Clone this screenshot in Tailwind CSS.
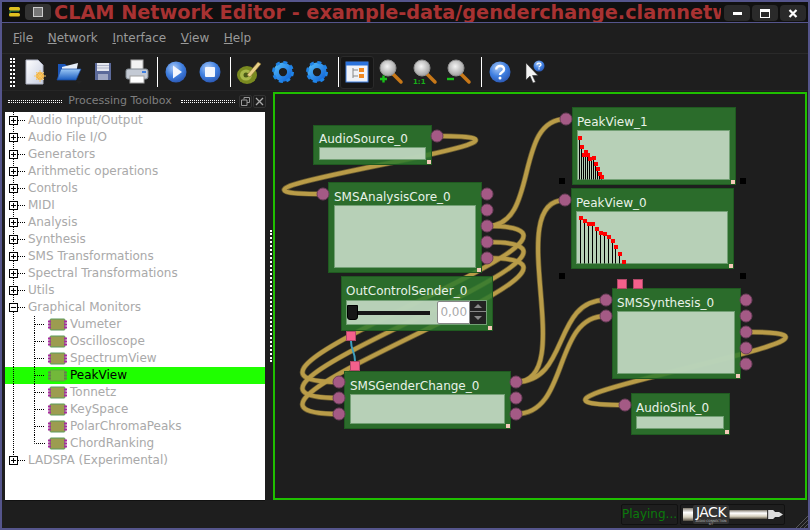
<!DOCTYPE html>
<html lang="en">
<head>
<meta charset="UTF-8">
<title>CLAM Network Editor</title>
<script src="https://cdn.jsdelivr.net/npm/@tailwindcss/browser@4"></script>
</head>
<body class="bg-[#1e1e1e] font-['DejaVu_Sans',sans-serif] overflow-hidden">

<svg width="0" height="0" class="absolute">
  <defs>
    <radialGradient id="blueBall" cx="40%" cy="30%" r="75%"><stop offset="0" stop-color="#a9c8f5"/><stop offset="0.55" stop-color="#3f7fe0"/><stop offset="1" stop-color="#2a55b0"/></radialGradient>
    <linearGradient id="gearBlue" x1="0" y1="0" x2="1" y2="1"><stop offset="0" stop-color="#4db4f5"/><stop offset="1" stop-color="#1568d8"/></linearGradient>
    <radialGradient id="lens" cx="45%" cy="40%" r="60%"><stop offset="0" stop-color="#f4f4f4"/><stop offset="1" stop-color="#a0a0a0"/></radialGradient>
    <linearGradient id="paper" x1="0" y1="0" x2="1" y2="1"><stop offset="0" stop-color="#ffffff"/><stop offset="1" stop-color="#c6cde0"/></linearGradient>
    <linearGradient id="folder" x1="0" y1="0" x2="0" y2="1"><stop offset="0" stop-color="#9cc8f5"/><stop offset="1" stop-color="#1a5cc0"/></linearGradient>
    <linearGradient id="jackPlug" x1="0" y1="0" x2="0" y2="1"><stop offset="0" stop-color="#8a8478"/><stop offset="0.35" stop-color="#ffffff"/><stop offset="0.7" stop-color="#d8d2c0"/><stop offset="1" stop-color="#5a5448"/></linearGradient>
    <symbol id="plus" viewBox="0 0 23 17"><path d="M8.5 0V4M8.5 13V17M13 8.5H20" stroke="#000" stroke-dasharray="1 1" fill="none"/><rect x="4.5" y="4.5" width="8" height="8" fill="#fff" stroke="#000"/><path d="M6 8.5H11M8.5 6V11" stroke="#000"/></symbol>
    <symbol id="plusLast" viewBox="0 0 23 17"><path d="M8.5 0V4M13 8.5H20" stroke="#000" stroke-dasharray="1 1" fill="none"/><rect x="4.5" y="4.5" width="8" height="8" fill="#fff" stroke="#000"/><path d="M6 8.5H11M8.5 6V11" stroke="#000"/></symbol>
    <symbol id="minus" viewBox="0 0 23 17"><path d="M8.5 0V4M8.5 13V17M13 8.5H20" stroke="#000" stroke-dasharray="1 1" fill="none"/><rect x="4.5" y="4.5" width="8" height="8" fill="#fff" stroke="#000"/><path d="M6 8.5H11" stroke="#000"/></symbol>
    <symbol id="proc" viewBox="0 0 65 17"><path d="M8.5 0V17M29.5 0V17M30 8.5H40" stroke="#000" stroke-dasharray="1 1" fill="none"/><rect x="45" y="3" width="15" height="11" rx="1" fill="#9c9c50" stroke="#5d9a5d"/><path d="M43 5.5H46M43 8.5H46M43 11.5H46M59 5.5H62M59 8.5H62M59 11.5H62" stroke="#a82aa0" stroke-width="2"/></symbol>
    <symbol id="procLast" viewBox="0 0 65 17"><path d="M8.5 0V17M29.5 0V8.5H40" stroke="#000" stroke-dasharray="1 1" fill="none"/><rect x="45" y="3" width="15" height="11" rx="1" fill="#9c9c50" stroke="#5d9a5d"/><path d="M43 5.5H46M43 8.5H46M43 11.5H46M59 5.5H62M59 8.5H62M59 11.5H62" stroke="#a82aa0" stroke-width="2"/></symbol>
    <symbol id="procSel" viewBox="0 0 65 17"><path d="M8.5 0V17M29.5 0V17M30 8.5H40" stroke="#000" stroke-dasharray="1 1" fill="none"/><rect x="45" y="3" width="15" height="11" rx="1" fill="#72b83a" stroke="#5aa83a"/><path d="M43 5.5H46M43 8.5H46M43 11.5H46M59 5.5H62M59 8.5H62M59 11.5H62" stroke="#6a7a50" stroke-width="2"/></symbol>
    <symbol id="glass" viewBox="0 0 26 26"><path d="M15 15L23 23" stroke="#c87818" stroke-width="3.5" stroke-linecap="round"/><circle cx="10" cy="9" r="8" fill="url(#lens)" stroke="#909090"/></symbol>
    <symbol id="gear" viewBox="0 0 24 24"><circle cx="12" cy="12" r="7.5" fill="none" stroke="url(#gearBlue)" stroke-width="6"/><circle cx="12" cy="12" r="10.5" fill="none" stroke="#1f84e8" stroke-width="3" stroke-dasharray="4.4 3.85"/></symbol>
  </defs>
</svg>

<div class="w-[810px] h-[530px] flex flex-col border-2 border-[#55558c] bg-[#1e1e1e] relative">
  <!-- title bar -->
  <div class="h-[21px] bg-[#101010] flex items-center relative shrink-0 overflow-hidden border-b border-[#55558c]">
    <svg width="16" height="16" viewBox="0 0 16 16" class="ml-[5px] shrink-0"><path d="M3 4H12V7H3V11H12" fill="none" stroke="#1f8f50" stroke-width="1"/><rect x="2" y="3" width="11" height="3.5" rx="1.5" fill="#e0c020"/><rect x="2" y="9" width="11" height="3.5" rx="1.5" fill="#e0c020"/></svg>
    <div class="ml-[2px] w-[26px] h-[16px] rounded-sm bg-[#333] flex items-center justify-center shrink-0"><div class="w-[10px] h-[10px] bg-[#777] border border-[#ccc]"></div></div>
    <div class="ml-[3px] w-[667px] overflow-hidden whitespace-nowrap text-[19.25px] leading-[21px] font-bold text-[#a83232]">CLAM Network Editor - example-data/genderchange.clamnetw</div>
    <div class="absolute right-[2px] top-[3px] flex gap-[2px]">
      <div class="w-[26px] h-[16px] rounded-sm bg-[#2a2a2a] flex items-center justify-center"><div class="w-[9px] h-[3px] bg-white"></div></div>
      <div class="w-[26px] h-[16px] rounded-sm bg-[#2a2a2a] flex items-center justify-center"><div class="w-[10px] h-[9px] border border-white border-t-[3px]"></div></div>
      <div class="w-[26px] h-[16px] rounded-sm bg-[#2a2a2a] flex items-center justify-center"><svg width="10" height="9" viewBox="0 0 10 9"><path d="M1.5 1L8.5 8M8.5 1L1.5 8" stroke="#fff" stroke-width="2.2"/></svg></div>
    </div>
  </div>

  <!-- menu bar -->
  <div class="h-[31px] flex items-center pl-[11px] gap-[14.6px] text-[12px] text-[#9a9a9a] border-b border-[#2a2a2a] shrink-0">
    <span><span class="underline">F</span>ile</span>
    <span><span class="underline">N</span>etwork</span>
    <span><span class="underline">I</span>nterface</span>
    <span><span class="underline">V</span>iew</span>
    <span><span class="underline">H</span>elp</span>
  </div>

  <!-- toolbar -->
  <div class="h-[37px] flex items-center shrink-0 border-b border-[#262626]">
    <div class="ml-[8px] mr-[3px] w-[5px] h-[29px] border-x-2 border-dotted border-white"></div>
    <div class="w-[34px] flex justify-center">
      <svg width="26" height="26" viewBox="0 0 26 26"><path d="M4 1H16L21 6V25H4Z" fill="url(#paper)" stroke="#b0b4c4"/><circle cx="18" cy="17" r="4" fill="#f2b040"/><path d="M18 11V23M12 17H24M14 13L22 21M22 13L14 21" stroke="#f6c868"/></svg>
    </div>
    <div class="w-[34px] flex justify-center">
      <svg width="26" height="26" viewBox="0 0 26 26"><path d="M2 5H9L11 7H20V20H2Z" fill="#1a55b8"/><path d="M6 8L22 4L20 14L6 15Z" fill="#e8f0fa"/><path d="M1 21L5 10H25L20 21Z" fill="url(#folder)" stroke="#1a4ea8" stroke-width="0.7"/><path d="M20 22H26L23 25Z" fill="#222"/></svg>
    </div>
    <div class="w-[34px] flex justify-center">
      <svg width="26" height="26" viewBox="0 0 26 26"><path d="M5 4H21V21H5Z" fill="#5c6a9a"/><rect x="7" y="4" width="12" height="8" fill="#e4e6ee"/><path d="M7 6.5H19M7 9H19" stroke="#b0b4c8"/><rect x="8" y="15" width="10" height="6" fill="#a0a8c4"/></svg>
    </div>
    <div class="w-[34px] flex justify-center">
      <svg width="26" height="26" viewBox="0 0 26 26"><rect x="7" y="1" width="12" height="11" fill="#f2f2f2" stroke="#a8a8a8"/><rect x="2" y="10" width="22" height="10" rx="2" fill="#c4cad4" stroke="#808890"/><rect x="6" y="17" width="14" height="7" fill="#fff" stroke="#a0a0a0"/><rect x="18" y="12" width="4" height="2" fill="#3f7fe0"/></svg>
    </div>
    <div class="ml-[3px] mr-[1px] w-px h-[30px] bg-white"></div>
    <div class="w-[34px] flex justify-center">
      <svg width="24" height="24" viewBox="0 0 24 24"><circle cx="12" cy="12" r="10.5" fill="url(#blueBall)"/><path d="M9 5.5L18 12L9 18.5Z" fill="#f4f6fc"/></svg>
    </div>
    <div class="w-[34px] flex justify-center">
      <svg width="24" height="24" viewBox="0 0 24 24"><circle cx="12" cy="12" r="10.5" fill="url(#blueBall)"/><rect x="7" y="7" width="10" height="10" rx="1" fill="#f4f6fc"/></svg>
    </div>
    <div class="ml-[3px] mr-[1px] w-px h-[30px] bg-white"></div>
    <div class="w-[34px] flex justify-center">
      <svg width="26" height="26" viewBox="0 0 26 26"><ellipse cx="11" cy="16" rx="10" ry="9" fill="#7a8a20"/><ellipse cx="10" cy="16" rx="6" ry="5.5" fill="#a8b84a"/><circle cx="10" cy="16" r="2.5" fill="#4a5a18"/><path d="M11 16L22 3L25 5L14 18Z" fill="#e8d088" stroke="#80682a" stroke-width="0.6"/></svg>
    </div>
    <div class="w-[34px] flex justify-center"><svg width="22" height="22"><use href="#gear"/></svg></div>
    <div class="w-[34px] flex justify-center"><svg width="22" height="22"><use href="#gear"/></svg></div>
    <div class="ml-[4px] mr-[1px] w-px h-[30px] bg-white"></div>
    <div class="w-[34px] h-[33px] rounded-[3px] bg-[#161616] border border-[#2a2a2a] flex items-center justify-center">
      <svg width="24" height="24" viewBox="0 0 24 24"><rect x="1" y="2" width="22" height="20" fill="#f0f2f8" stroke="#3f7fe0"/><rect x="1" y="2" width="22" height="3.5" fill="#2a72dc"/><path d="M8 8V18M8 10H13M8 16H13" stroke="#888" fill="none"/><rect x="14" y="8" width="5" height="4" fill="#f08820"/><rect x="14" y="14" width="5" height="4" fill="#f08820"/></svg>
    </div>
    <div class="w-[34px] flex justify-center relative">
      <svg width="26" height="26"><use href="#glass"/><path d="M2 20H9M5.5 16.5V23.5" stroke="#18c018" stroke-width="2.4"/></svg>
    </div>
    <div class="w-[34px] flex justify-center">
      <svg width="26" height="26"><use href="#glass"/><text x="1" y="25" font-size="7" font-weight="700" fill="#18b018">1:1</text></svg>
    </div>
    <div class="w-[34px] flex justify-center">
      <svg width="26" height="26"><use href="#glass"/><path d="M1 20H8" stroke="#18c018" stroke-width="2.4"/></svg>
    </div>
    <div class="ml-[5px] mr-[1px] w-px h-[30px] bg-white"></div>
    <div class="w-[34px] flex justify-center">
      <svg width="24" height="24" viewBox="0 0 24 24"><circle cx="12" cy="12" r="10.5" fill="url(#blueBall)"/><path d="M8.2 9.5C8.2 4.8 16 5 16 9.5C16 12.3 12 12.2 12 15" fill="none" stroke="#fff" stroke-width="2.4"/><circle cx="12" cy="18" r="1.5" fill="#fff"/></svg>
    </div>
    <div class="w-[34px] flex justify-center">
      <svg width="24" height="24" viewBox="0 0 24 24"><path d="M4 3V20L8 16L11 23L13.5 22L10.5 15.5H16Z" fill="#f4f4f4" stroke="#333" stroke-width="0.6"/><circle cx="17" cy="6" r="5.5" fill="url(#blueBall)"/><path d="M15 4.8C15 2.6 19 2.7 19 4.8C19 6.1 17 6.1 17 7.4M17 8.3V9.4" fill="none" stroke="#fff" stroke-width="1.2"/></svg>
    </div>
  </div>

  <!-- main area -->
  <div class="flex flex-1 min-h-0">
    <!-- dock -->
    <div class="w-[263px] ml-[3px] flex flex-col shrink-0">
      <div class="h-[21px] flex items-center text-[11px] text-[#7e7e7e]">
        <div class="ml-[3px] w-[54px] h-[3px] border-y border-dotted border-white"></div>
        <div class="w-[119px] pr-[3px] text-center">Processing Toolbox</div>
        <div class="w-[54px] h-[3px] border-y border-dotted border-white"></div>
        <div class="ml-[4px] w-[13px] h-[13px] rounded-[2px] border border-[#333] flex items-center justify-center">
          <svg width="9" height="9" viewBox="0 0 9 9"><path d="M3 2.5V.5H8.500V5.500H6M.5 3H6V8.500H.5Z" fill="none" stroke="#999"/></svg>
        </div>
        <div class="ml-px w-[13px] h-[13px] rounded-[2px] border border-[#333] flex items-center justify-center">
          <svg width="9" height="9" viewBox="0 0 9 9"><path d="M1 1L8 8M8 1L1 8" stroke="#aaa" stroke-width="1.3"/></svg>
        </div>
      </div>
      <div class="h-[389px] w-[260px] bg-white text-[12px] leading-[17px] text-[#a9a9a9] whitespace-nowrap border-b border-[#111]">
        <div class="flex h-[17px]"><svg width="23" height="17"><use href="#plus"/></svg>Audio Input/Output</div>
        <div class="flex h-[17px]"><svg width="23" height="17"><use href="#plus"/></svg>Audio File I/O</div>
        <div class="flex h-[17px]"><svg width="23" height="17"><use href="#plus"/></svg>Generators</div>
        <div class="flex h-[17px]"><svg width="23" height="17"><use href="#plus"/></svg>Arithmetic operations</div>
        <div class="flex h-[17px]"><svg width="23" height="17"><use href="#plus"/></svg>Controls</div>
        <div class="flex h-[17px]"><svg width="23" height="17"><use href="#plus"/></svg>MIDI</div>
        <div class="flex h-[17px]"><svg width="23" height="17"><use href="#plus"/></svg>Analysis</div>
        <div class="flex h-[17px]"><svg width="23" height="17"><use href="#plus"/></svg>Synthesis</div>
        <div class="flex h-[17px]"><svg width="23" height="17"><use href="#plus"/></svg>SMS Transformations</div>
        <div class="flex h-[17px]"><svg width="23" height="17"><use href="#plus"/></svg>Spectral Transformations</div>
        <div class="flex h-[17px]"><svg width="23" height="17"><use href="#plus"/></svg>Utils</div>
        <div class="flex h-[17px]"><svg width="23" height="17"><use href="#minus"/></svg>Graphical Monitors</div>
        <div class="flex h-[17px]"><svg width="65" height="17"><use href="#proc"/></svg>Vumeter</div>
        <div class="flex h-[17px]"><svg width="65" height="17"><use href="#proc"/></svg>Oscilloscope</div>
        <div class="flex h-[17px]"><svg width="65" height="17"><use href="#proc"/></svg>SpectrumView</div>
        <div class="flex h-[17px] bg-[#1fff00] text-black"><svg width="65" height="17"><use href="#procSel"/></svg>PeakView</div>
        <div class="flex h-[17px]"><svg width="65" height="17"><use href="#proc"/></svg>Tonnetz</div>
        <div class="flex h-[17px]"><svg width="65" height="17"><use href="#proc"/></svg>KeySpace</div>
        <div class="flex h-[17px]"><svg width="65" height="17"><use href="#proc"/></svg>PolarChromaPeaks</div>
        <div class="flex h-[17px]"><svg width="65" height="17"><use href="#procLast"/></svg>ChordRanking</div>
        <div class="flex h-[17px]"><svg width="23" height="17"><use href="#plusLast"/></svg>LADSPA (Experimental)</div>
      </div>
    </div>

    <!-- splitter -->
    <div class="w-[4px] shrink-0 flex items-center justify-end"><div class="w-[2px] h-[132px] mt-[-28px] border-l-2 border-dotted border-white"></div></div>

    <!-- canvas -->
    <div class="flex-1 flex flex-col min-w-0">
      <div class="w-[534px] h-[408px] border-2 border-[#1fbf00] bg-[#1e1e1e] relative overflow-hidden ml-px mt-px">
        <svg class="absolute left-0 top-0" width="530" height="404" viewBox="275 95 530 404" fill="none">
          <g stroke="#6a5c30" stroke-width="5.5">
            <path d="M437 137C607 137 153 195 323 195"/>
            <path d="M746 333C921 333 450 406 625 406"/>
            <path d="M487 227C657 227 169 383 339 383"/>
            <path d="M487 243C657 243 169 399 339 399"/>
            <path d="M487 259C657 259 169 415 339 415"/>
            <path d="M487 227C540 227 513 120 566 120"/>
            <path d="M516 383C580 383 501 201 565 201"/>
            <path d="M516 383C570 383 552 301 606 301"/>
            <path d="M516 415C570 415 552 317 606 317"/>
          </g>
          <g stroke="#b99c48" stroke-width="4">
            <path d="M437 137C607 137 153 195 323 195"/>
            <path d="M746 333C921 333 450 406 625 406"/>
            <path d="M487 227C657 227 169 383 339 383"/>
            <path d="M487 243C657 243 169 399 339 399"/>
            <path d="M487 259C657 259 169 415 339 415"/>
            <path d="M487 227C540 227 513 120 566 120"/>
            <path d="M516 383C580 383 501 201 565 201"/>
            <path d="M516 383C570 383 552 301 606 301"/>
            <path d="M516 415C570 415 552 317 606 317"/>
          </g>
          <path d="M351 342C351 352 355 352 355 362" stroke="#3f9fc0" stroke-width="2"/>
        </svg>

        <!-- AudioSource_0 -->
        <div class="absolute left-[38px] top-[31px] w-[119px] h-[40px] bg-[#2e7a2e]/85 border border-[#1f5a20] px-[5px] text-[12px] text-[#e8f2e8]">
          <div class="h-[21px] leading-[26px]">AudioSource_0</div>
          <div class="h-[13px] w-[107px] bg-[#c6dcc6]/90 border border-[#72a074]"></div>
          <div class="absolute right-0 bottom-0 w-[4px] h-[4px] bg-[#f4c8b8]"></div>
        </div>
        <!-- SMSAnalysisCore_0 -->
        <div class="absolute left-[53px] top-[88px] w-[154px] h-[91px] bg-[#2e7a2e]/85 border border-[#1f5a20] px-[5px] text-[12px] text-[#e8f2e8]">
          <div class="h-[22px] leading-[28px]">SMSAnalysisCore_0</div>
          <div class="h-[63px] w-[142px] bg-[#c6dcc6]/90 border border-[#72a074]"></div>
          <div class="absolute right-0 bottom-0 w-[4px] h-[4px] bg-[#f4c8b8]"></div>
        </div>
        <!-- OutControlSender_0 -->
        <div class="absolute left-[66px] top-[182px] w-[152px] h-[55px] bg-[#2e7a2e]/85 border border-[#1f5a20] px-[4px] text-[12px] text-[#e8f2e8]">
          <div class="h-[23px] leading-[28px]">OutControlSender_0</div>
          <div class="h-[25px] w-[141px] bg-[#c6dcc6]/90 border border-[#72a074] flex items-center relative">
            <div class="w-[11px] h-[15px] bg-[#161616] rounded-b-[3px] border border-black"></div>
            <div class="w-[73px] h-[4px] bg-[#161616]"></div>
            <div class="ml-[7px] w-[33px] h-[23px] bg-white border border-[#888] rounded-l-[2px] text-[12px] leading-[21px] text-[#aaa] text-center">0,00</div>
            <div class="w-[16px] h-[23px] bg-[#222] flex flex-col">
              <div class="h-[11px] flex items-center justify-center border-b border-[#888]"><div class="border-x-[4px] border-x-transparent border-b-[4px] border-b-[#888]"></div></div>
              <div class="h-[11px] flex items-center justify-center"><div class="border-x-[4px] border-x-transparent border-t-[4px] border-t-[#888]"></div></div>
            </div>
          </div>
          <div class="absolute right-0 bottom-0 w-[4px] h-[4px] bg-[#f4c8b8]"></div>
        </div>
        <!-- SMSGenderChange_0 -->
        <div class="absolute left-[69px] top-[277px] w-[167px] h-[58px] bg-[#2e7a2e]/85 border border-[#1f5a20] px-[5px] text-[12px] text-[#e8f2e8]">
          <div class="h-[22px] leading-[28px]">SMSGenderChange_0</div>
          <div class="h-[30px] w-[155px] bg-[#c6dcc6]/90 border border-[#72a074]"></div>
          <div class="absolute right-0 bottom-0 w-[4px] h-[4px] bg-[#f4c8b8]"></div>
        </div>
        <!-- PeakView_1 -->
        <div class="absolute left-[297px] top-[13px] w-[164px] h-[78px] bg-[#2e7a2e]/85 border border-[#1f5a20] px-[4px] text-[12px] text-[#e8f2e8]">
          <div class="h-[22px] leading-[28px]">PeakView_1</div>
          <div class="h-[50px] w-[153px] bg-[#c6dcc6]/90 border border-[#72a074]"></div>
          <div class="absolute right-0 bottom-0 w-[4px] h-[4px] bg-[#f4c8b8]"></div>
        </div>
        <!-- PeakView_0 -->
        <div class="absolute left-[296px] top-[94px] w-[163px] h-[81px] bg-[#2e7a2e]/85 border border-[#1f5a20] px-[4px] text-[12px] text-[#e8f2e8]">
          <div class="h-[22px] leading-[28px]">PeakView_0</div>
          <div class="h-[53px] w-[152px] bg-[#c6dcc6]/90 border border-[#72a074]"></div>
          <div class="absolute right-0 bottom-0 w-[4px] h-[4px] bg-[#f4c8b8]"></div>
        </div>
        <!-- SMSSynthesis_0 -->
        <div class="absolute left-[337px] top-[194px] w-[129px] h-[91px] bg-[#2e7a2e]/85 border border-[#1f5a20] px-[4px] text-[12px] text-[#e8f2e8]">
          <div class="h-[22px] leading-[28px]">SMSSynthesis_0</div>
          <div class="h-[63px] w-[118px] bg-[#c6dcc6]/90 border border-[#72a074]"></div>
          <div class="absolute right-0 bottom-0 w-[4px] h-[4px] bg-[#f4c8b8]"></div>
        </div>
        <!-- AudioSink_0 -->
        <div class="absolute left-[356px] top-[299px] w-[99px] h-[42px] bg-[#2e7a2e]/85 border border-[#1f5a20] px-[4px] text-[12px] text-[#e8f2e8]">
          <div class="h-[22px] leading-[28px]">AudioSink_0</div>
          <div class="h-[13px] w-[88px] bg-[#c6dcc6]/90 border border-[#72a074]"></div>
          <div class="absolute right-0 bottom-0 w-[4px] h-[4px] bg-[#f4c8b8]"></div>
        </div>

        <!-- ports, controls and peak plots sit on top of the boxes -->
        <svg class="absolute left-0 top-0" width="530" height="404" viewBox="275 95 530 404">
          <g fill="#a45a85" stroke="#6e3f5c">
            <circle cx="437" cy="137" r="6"/><circle cx="323" cy="195" r="6"/>
            <circle cx="487" cy="195" r="6"/><circle cx="487" cy="211" r="6"/><circle cx="487" cy="227" r="6"/><circle cx="487" cy="243" r="6"/><circle cx="487" cy="259" r="6"/>
            <circle cx="339" cy="383" r="6"/><circle cx="339" cy="399" r="6"/><circle cx="339" cy="415" r="6"/>
            <circle cx="516" cy="383" r="6"/><circle cx="516" cy="399" r="6"/><circle cx="516" cy="415" r="6"/>
            <circle cx="566" cy="120" r="6"/><circle cx="565" cy="201" r="6"/>
            <circle cx="606" cy="301" r="6"/><circle cx="606" cy="317" r="6"/>
            <circle cx="746" cy="301" r="6"/><circle cx="746" cy="317" r="6"/><circle cx="746" cy="333" r="6"/><circle cx="746" cy="349" r="6"/><circle cx="746" cy="365" r="6"/>
            <circle cx="625" cy="406" r="6"/>
          </g>
          <g fill="#f4608c" stroke="#b04868">
            <rect x="346.500" y="332.500" width="9" height="9"/><rect x="350.500" y="362.500" width="9" height="9"/>
            <rect x="617.500" y="280.500" width="9" height="9"/><rect x="633.500" y="280.500" width="9" height="9"/>
          </g>
          <g fill="#000">
            <rect x="559" y="179" width="6" height="6"/><rect x="740" y="179" width="6" height="6"/>
            <rect x="559" y="274" width="6" height="6"/><rect x="740" y="274" width="6" height="6"/>
          </g>
          <path d="M579.500 139V180.500M581.500 148V180.500M583.500 156V180.500M585.500 153V180.500M587.500 156V180.500M589.500 160V180.500M591.500 161V180.500M593.500 159V180.500M595.500 165V180.500M597.500 170V180.500M599.500 175V180.500M601.500 178V180.500" stroke="#000"/>
          <g fill="#f00">
            <rect x="578" y="137" width="4" height="4"/><rect x="580" y="146" width="4" height="4"/><rect x="582" y="154" width="4" height="4"/><rect x="584" y="151" width="4" height="4"/><rect x="586" y="154" width="4" height="4"/><rect x="588" y="158" width="4" height="4"/><rect x="592" y="157" width="4" height="4"/><rect x="594" y="163" width="4" height="4"/><rect x="596" y="168" width="4" height="4"/><rect x="598" y="173" width="4" height="4"/><rect x="600" y="176" width="4" height="4"/>
          </g>
          <path d="M580.500 219V264.500M584.500 222V264.500M588.500 225V264.500M592.500 225V264.500M596.500 230V264.500M600.500 234V264.500M604.500 235V264.500M608.500 238V264.500M612.500 242V264.500M615.500 248V264.500M619.500 255V264.500" stroke="#000"/>
          <g fill="#f00">
            <rect x="579" y="217" width="4" height="4"/><rect x="583" y="220" width="4" height="4"/><rect x="587" y="223" width="4" height="4"/><rect x="591" y="223" width="4" height="4"/><rect x="595" y="228" width="4" height="4"/><rect x="599" y="232" width="4" height="4"/><rect x="603" y="233" width="4" height="4"/><rect x="607" y="236" width="4" height="4"/><rect x="611" y="240" width="4" height="4"/><rect x="614" y="246" width="4" height="4"/><rect x="618" y="253" width="4" height="4"/><rect x="622" y="261" width="4" height="4"/>
          </g>
        </svg>
      </div>
    </div>
  </div>

  <!-- status bar -->
  <div class="absolute right-[23px] bottom-[3px] h-[21px] flex gap-[2px]">
    <div class="w-[57px] border border-[#111] rounded-[2px] text-[12px] leading-[19px] text-[#0b7a0b] text-center whitespace-nowrap">Playing...</div>
    <div class="w-[105px] border border-[#111] rounded-[2px] flex items-center relative">
      <svg width="103" height="13" viewBox="0 0 103 13" class="ml-px"><rect x="1" y="0" width="11" height="13" fill="url(#jackPlug)"/><rect x="48" y="2" width="38" height="9" fill="url(#jackPlug)"/><path d="M87 2H92L94 4H98L102 6.500L98 9H94L92 11H87Z" fill="#ddd"/></svg>
      <div class="absolute left-[12px] top-0 w-[36px] h-[19px] bg-[#333] rounded-[2px] text-[14px] leading-[15px] text-white text-center tracking-[-0.5px]">JACK<div class="text-[3px] leading-[3px] tracking-normal text-[#bbb]">AUDIO CONNECTION KIT</div></div>
    </div>
  </div>
  <svg width="13" height="13" viewBox="0 0 13 13" class="absolute right-0 bottom-0"><path d="M13 1L1 13M13 5L5 13M13 9L9 13" stroke="#555"/></svg>
</div>
</body>
</html>
